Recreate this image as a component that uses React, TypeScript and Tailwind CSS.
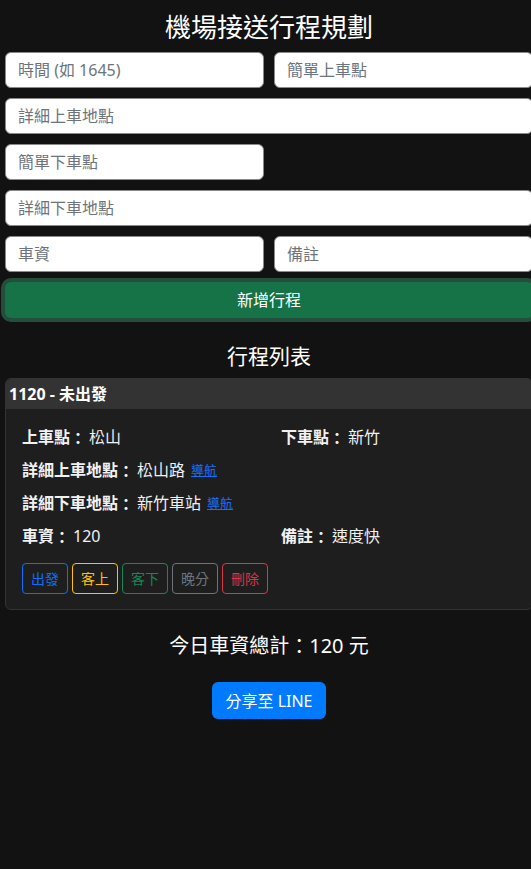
const font = { fontFamily: '"Noto Sans", "Noto Sans CJK TC", sans-serif' };
const cjk = { fontFamily: '"Noto Sans CJK TC", sans-serif' };

function Field({ placeholder }: { placeholder: string }) {
  return (
    <input
      placeholder={placeholder}
      className="h-[36px] w-full rounded-[6px] border border-[#8a8a8a] bg-white px-[12px] text-[16px] text-[#222] placeholder:text-[#6c757d] outline-none"
    />
  );
}

function Info({ label, value, nav }: { label: string; value: string; nav?: boolean }) {
  return (
    <div className="flex h-[24px] items-center overflow-visible">
      <span className="font-bold leading-[24px]">{label}</span>
      <span className="font-bold leading-[16px]" style={cjk}>：</span>
      <span className="ml-[3px] leading-[24px]">{value}</span>
      {nav && <a className="ml-[6px] text-[13px] leading-[18px] text-[#1a6ef5] underline">導航</a>}
    </div>
  );
}

const actions = [
  { text: "出發", cls: "border-[#0d6efd] text-[#0d6efd]" },
  { text: "客上", cls: "border-[#ffc107] text-[#ffc107]" },
  { text: "客下", cls: "border-[#198754] text-[#198754]" },
  { text: "晚分", cls: "border-[#6c757d] text-[#6c757d]" },
  { text: "刪除", cls: "border-[#dc3545] text-[#dc3545]" },
];

export default function App() {
  return (
    <div className="min-h-screen w-full overflow-hidden bg-[#121212] text-[#f1f1f1]" style={font}>
      <div className="w-[538px] px-[5px] pt-[12px]">
        <h1 className="mb-[9px] text-center text-[26px] leading-[31px] text-white">機場接送行程規劃</h1>

        <div className="flex flex-col gap-[10px]">
          <div className="grid grid-cols-2 gap-[10px]">
            <Field placeholder="時間 (如 1645)" />
            <Field placeholder="簡單上車點" />
          </div>
          <Field placeholder="詳細上車地點" />
          <div className="grid grid-cols-2 gap-[10px]">
            <Field placeholder="簡單下車點" />
          </div>
          <Field placeholder="詳細下車地點" />
          <div className="grid grid-cols-2 gap-[10px]">
            <Field placeholder="車資" />
            <Field placeholder="備註" />
          </div>
          <button className="h-[36px] w-full rounded-[6px] bg-[#157347] text-[16px] text-white shadow-[0_0_0_4px_rgba(60,153,110,0.45)]">
            新增行程
          </button>
        </div>

        <h2 className="mt-[26px] mb-[10px] text-center text-[21px] leading-[24px] text-white">行程列表</h2>

        <div className="overflow-hidden rounded-[6px] border border-[#333] bg-[#1e1e1e]">
          <div className="h-[30px] bg-[#333] pl-[3px] text-[16px] font-bold leading-[30px] text-white">1120 - 未出發</div>
          <div className="flex flex-col gap-[9px] px-[16px] pt-[16px] pb-[15px] text-[16px]">
            <div className="grid grid-cols-[259px_1fr]">
              <Info label="上車點" value="松山" />
              <Info label="下車點" value="新竹" />
            </div>
            <Info label="詳細上車地點" value="松山路" nav />
            <Info label="詳細下車地點" value="新竹車站" nav />
            <div className="grid grid-cols-[259px_1fr]">
              <Info label="車資" value="120" />
              <Info label="備註" value="速度快" />
            </div>
            <div className="mt-[6px] flex gap-[4px]">
              {actions.map((a) => (
                <button
                  key={a.text}
                  className={`h-[31px] rounded-[4px] border bg-transparent px-[8px] text-[14px] leading-[29px] ${a.cls}`}
                >
                  {a.text}
                </button>
              ))}
            </div>
          </div>
        </div>

        <div className="mt-[24px] flex h-[24px] items-center justify-center text-[20px] text-white">
          <span className="leading-[24px]">今日車資總計</span>
          <span className="leading-[20px]" style={cjk}>：</span>
          <span className="leading-[24px]">120 元</span>
        </div>

        <div className="mt-[24px] flex justify-center">
          <button className="h-[37px] rounded-[6px] bg-[#007bff] px-[13px] text-[16px] text-white">分享至 LINE</button>
        </div>
      </div>
    </div>
  );
}
